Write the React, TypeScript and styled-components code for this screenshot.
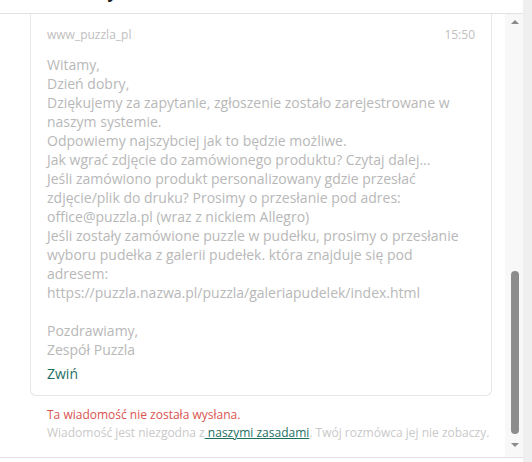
import React from 'react'
import styled, { createGlobalStyle } from 'styled-components'

const Global = createGlobalStyle`
  html, body {
    margin: 0;
    padding: 0;
    background: #fff;
  }
  body {
    font-family: "Open Sans", "Noto Sans", sans-serif;
  }
`

const Frame = styled.div`
  width: 532px;
  height: 462px;
  display: flex;
  overflow: hidden;
`

const Panel = styled.div`
  width: 523px;
  display: flex;
  flex-direction: column;
`

const Edge = styled.div`
  width: 9px;
  background: #efefef;
`

const TopBar = styled.div`
  height: 13px;
  border-bottom: 1px solid #e3e3e3;
  overflow: hidden;
`

const Title = styled.div`
  margin: -19px 0 0 40px;
  font-size: 16px;
  font-weight: 700;
  line-height: 22px;
  color: #222;
`

const Body = styled.div`
  height: 443px;
  display: flex;
  border-bottom: 1px solid #e3e3e3;
`

const Feed = styled.div`
  flex: 1;
  padding: 0 13px 0 30px;
  overflow: hidden;
`

const Card = styled.div`
  border: 1px solid #e6e6e6;
  border-top: none;
  border-radius: 0 0 6px 6px;
  padding: 13px 16px 12px 16px;
`

const Meta = styled.div`
  display: flex;
  justify-content: space-between;
  font-size: 12px;
  line-height: 16px;
  color: #c0c0c0;
`

const Message = styled.div`
  margin-top: 12px;
  font-size: 14px;
  line-height: 19px;
  color: #b8b8b8;
  white-space: pre-line;
`

const Toggle = styled.div`
  margin-top: 5px;
  font-size: 14px;
  line-height: 19px;
  color: #1d6f63;
`

const Notice = styled.div`
  padding: 10px 0 0 17px;
  font-size: 12px;
  line-height: 18px;
`

const Error = styled.div`
  color: #d9534f;
`

const Hint = styled.div`
  color: #c9c9c9;
  white-space: nowrap;
`

const Rules = styled.span`
  color: #1d6f63;
  text-decoration: underline;
`

const Scroll = styled.div`
  width: 18px;
  background: #f8f8f8;
  display: flex;
  flex-direction: column;
  align-items: center;
`

const Arrow = styled.div<{ $down?: boolean }>`
  width: 0;
  height: 0;
  margin: ${(p) => (p.$down ? '9px 0 0 2px' : '6px 0 0 2px')};
  border-left: 4px solid transparent;
  border-right: 4px solid transparent;
  ${(p) =>
    p.$down ? 'border-top: 4px solid #8a8a8a;' : 'border-bottom: 4px solid #8a8a8a;'}
`

const Thumb = styled.div`
  margin: 247px 0 0 2px;
  width: 8px;
  height: 163px;
  border-radius: 4px;
  background: #8c8c8c;
`

const text = `Witamy,
Dzień dobry,
Dziękujemy za zapytanie, zgłoszenie zostało zarejestrowane w naszym systemie.
Odpowiemy najszybciej jak to będzie możliwe.
Jak wgrać zdjęcie do zamówionego produktu? Czytaj dalej...
Jeśli zamówiono produkt personalizowany gdzie przesłać zdjęcie/plik do druku? Prosimy o przesłanie pod adres: office@puzzla.pl (wraz z nickiem Allegro)
Jeśli zostały zamówione puzzle w pudełku, prosimy o przesłanie wyboru pudełka z galerii pudełek. która znajduje się pod adresem:
https://puzzla.nazwa.pl/puzzla/galeriapudelek/index.html

Pozdrawiamy,
Zespół Puzzla`

export default function App() {
  return (
    <>
      <Global />
      <Frame>
        <Panel>
          <TopBar>
            <Title>Rozmowy</Title>
          </TopBar>
          <Body>
            <Feed>
              <Card>
                <Meta>
                  <span>www_puzzla_pl</span>
                  <span>15:50</span>
                </Meta>
                <Message>{text}</Message>
                <Toggle>Zwiń</Toggle>
              </Card>
              <Notice>
                <Error>Ta wiadomość nie została wysłana.</Error>
                <Hint>
                  Wiadomość jest niezgodna z<Rules> naszymi zasadami</Rules>. Twój
                  rozmówca jej nie zobaczy.
                </Hint>
              </Notice>
            </Feed>
            <Scroll>
              <Arrow />
              <Thumb />
              <Arrow $down />
            </Scroll>
          </Body>
        </Panel>
        <Edge />
      </Frame>
    </>
  )
}
